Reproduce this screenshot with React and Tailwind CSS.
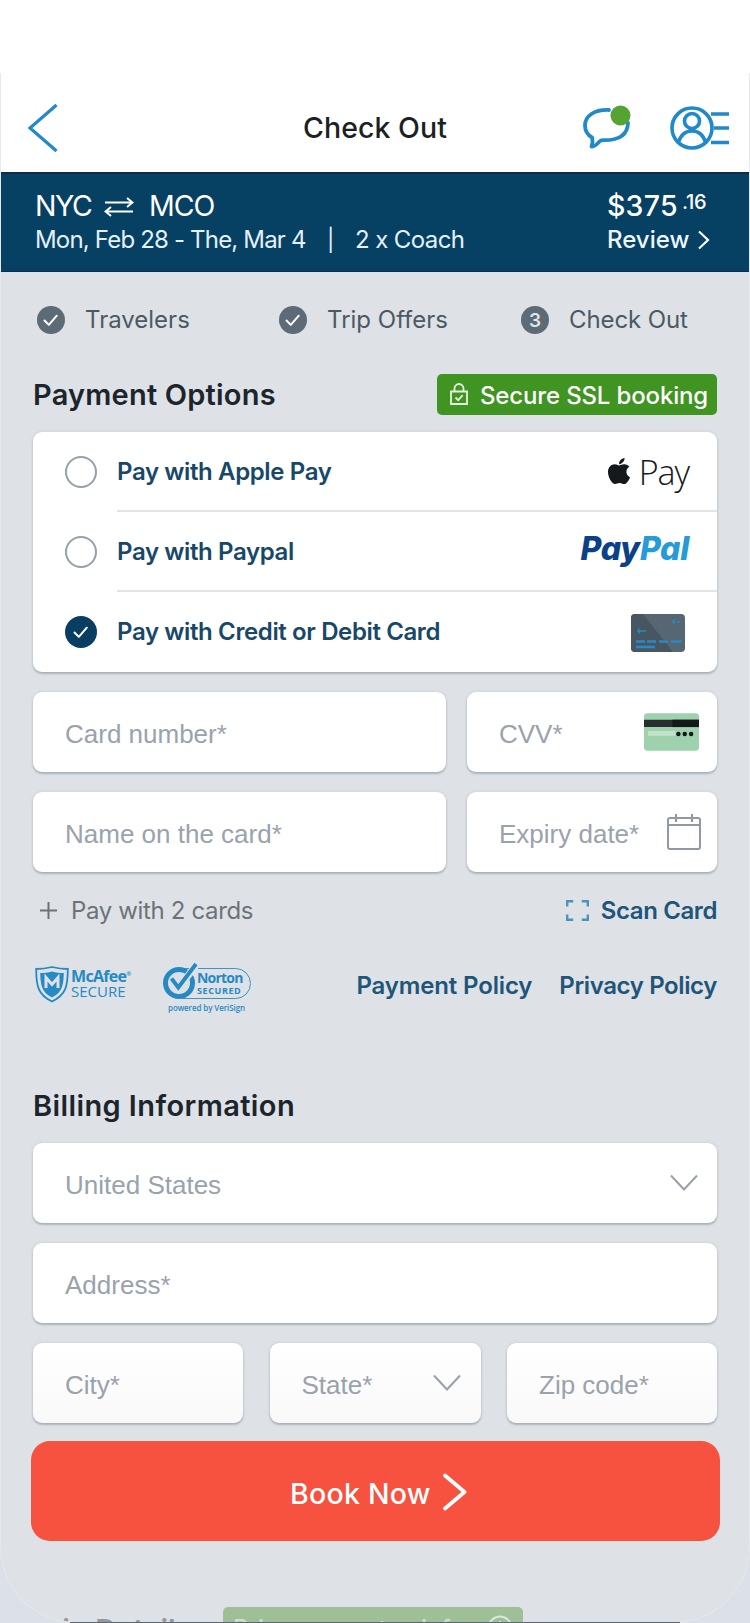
import { FaApple } from "react-icons/fa";

const shadow = "shadow-[0_2px_2px_rgba(120,130,140,0.45),0_0_3px_rgba(120,130,140,0.25)]";

function Field({ label, className = "", children }) {
  return (
    <div className={`flex h-20 items-center justify-between rounded-[9px] bg-white pl-8 font-['Liberation_Sans',sans-serif] text-[26px] leading-none whitespace-nowrap text-[#9aa2ac] ${shadow} ${className}`}>
      <span className="pt-[3px]">{label}</span>
      {children}
    </div>
  );
}

function Tick({ size }) {
  return (
    <svg width={size} height={size} viewBox="0 0 28 28" fill="none" stroke="#fff" strokeWidth="2" strokeLinecap="round" strokeLinejoin="round">
      <path d="M7.5 14.5l4.3 4.4 8-9.2" />
    </svg>
  );
}

function Step({ mark, label, className }) {
  return (
    <div className={`flex items-center text-[24px] leading-none text-[#4d5962] ${className}`}>
      <span className="mr-5 flex size-7 items-center justify-center rounded-full bg-[#5d6b77] text-[19px] font-semibold text-[#dfe5ea]">{mark}</span>
      {label}
    </div>
  );
}

function Option({ label, checked, divider, children }) {
  return (
    <div className="flex h-20 items-center pl-8">
      {checked ? (
        <span className="flex size-8 items-center justify-center rounded-full bg-[#0a3d62]">
          <Tick size={28} />
        </span>
      ) : (
        <span className="size-8 rounded-full border-[2.5px] border-[#979fa9] bg-white" />
      )}
      <div className={`ml-5 flex h-full flex-1 items-center justify-between ${divider ? "border-b-2 border-[#e1e4e9] pt-0.5" : ""}`}>
        <span className="text-[24px] leading-none font-semibold tracking-[-0.38px] text-[#174869]">{label}</span>
        {children}
      </div>
    </div>
  );
}

function ChevronDown({ className }) {
  return (
    <svg className={className} width="30" height="20" viewBox="0 0 30 20" fill="none" stroke="#98a0aa" strokeWidth="2">
      <path d="M2 2.5l13 14 13-14" />
    </svg>
  );
}

export default function App() {
  return (
    <div className="relative flex h-[1623px] w-[750px] flex-col overflow-hidden bg-[#dee2e7] font-['Inter',sans-serif] text-[#1c252c]">
      <header className="flex h-[172px] items-center justify-between bg-white pt-[84px] pr-[20px] pl-[27px]">
        <svg width="32" height="52" viewBox="0 0 32 52" fill="none" stroke="#2089c9" strokeWidth="3.2">
          <path d="M29.5 3L3 26l26.5 23" />
        </svg>
        <h1 className="ml-[244px] text-[28.5px] leading-none font-medium tracking-[0.05px] text-[#1c1f24]">Check Out</h1>
        <div className="ml-auto flex items-center gap-[39px]">
          <svg width="48" height="46" viewBox="0 0 48 46" fill="none">
            <path d="M26 5C11 4.500 2 11 2 20.500c0 5.500 2.800 9.500 7.200 12.200.8 3.200.4 6-.7 8.800 1.500.6 4-.7 8-5 .9-1 2-1.300 3.500-1.300C34 35.500 44.500 31 45 18" stroke="#2089c9" strokeWidth="3.800" strokeLinecap="round" strokeLinejoin="round" />
            <circle cx="37.500" cy="10.500" r="10" fill="#55a332" />
          </svg>
          <svg width="60" height="46" viewBox="0 0 60 46" fill="none" stroke="#2089c9" strokeWidth="3.600">
            <circle cx="22" cy="23" r="20" />
            <circle cx="22" cy="16" r="7.500" />
            <path d="M8.500 37C11 29.500 16 26 22 26s11 3.500 13.500 11M41 9h18M44 23h15M41 37.500h18" />
          </svg>
        </div>
      </header>

      <section className="flex h-[100px] justify-between border-t-2 border-b border-t-[#0a2e4c] border-b-[#0a2e4c] bg-[#064063] pt-4 pr-[39px] pl-[35px] text-white">
        <div>
          <div className="flex h-[33px] items-center text-[28.5px] leading-none">
            <span className="w-[69px] tracking-[-1.4px]">NYC</span>
            <svg width="30" height="20" viewBox="0 0 30 20" fill="none" stroke="#fff" strokeWidth="2">
              <path d="M1 5.500h27M23 1l5.500 4.500L23 10M29 14.500H2M7 10L1.500 14.500 7 19" />
            </svg>
            <span className="ml-[15px] tracking-[-1px]">MCO</span>
          </div>
          <div className="flex h-[33px] items-center text-[24px] leading-none text-[#e4f1fa]">
            <span className="w-[292px] tracking-[-0.82px] whitespace-nowrap">Mon, Feb 28 - The, Mar 4</span>
            <span className="w-[28px] text-[22px]">|</span>
            <span className="tracking-[-0.6px]">2 x Coach</span>
          </div>
        </div>
        <div className="w-[104px]">
          <div className="flex h-[33px] items-center leading-none font-medium">
            <span className="w-[75px] text-[28.5px] tracking-[0.2px]">$375</span>
            <span className="-mt-2.5 text-[20px] tracking-[-0.3px]">.16</span>
          </div>
          <div className="flex h-[33px] items-center text-[24px] leading-none font-medium text-[#eef7fd]">
            Review
            <svg className="ml-2" width="13" height="20" viewBox="0 0 13 20" fill="none" stroke="#fff" strokeWidth="2.200">
              <path d="M2 1.500l9 8.500-9 8.500" />
            </svg>
          </div>
        </div>
      </section>

      <main className="px-[33px]">
        <div className="mt-[23px] flex h-[50px] items-center pl-1">
          <Step className="w-[242px]" mark={<Tick size={28} />} label="Travelers" />
          <Step className="w-[242px]" mark={<Tick size={28} />} label="Trip Offers" />
          <Step className="tracking-[-0.1px]" mark="3" label="Check Out" />
        </div>

        <div className="mt-[29px] flex h-[41px] items-center justify-between">
          <h2 className="text-[29px] leading-none font-semibold tracking-[0.2px]">Payment Options</h2>
          <div className="flex h-[41px] w-[280px] items-center rounded-[5px] bg-[#3f9422] pt-[2px] pl-[13px] text-[24px] leading-none font-medium tracking-[-0.15px] whitespace-nowrap text-white">
            <svg className="-mt-1 mr-3" width="18" height="22" viewBox="0 0 18 22" fill="none" stroke="#e6f3e0" strokeWidth="1.800">
              <path d="M1 8.500h16V21H1zM4.500 8V5.500a4.500 4.500 0 0 1 9 0V8M5.500 14.500l2.700 2.700 4.500-5" />
            </svg>
            Secure SSL booking
          </div>
        </div>

        <div className={`mt-[17px] h-60 rounded-[9px] bg-white ${shadow}`}>
          <Option label="Pay with Apple Pay" divider>
            <div className="mr-[28px] flex items-center gap-[5px] text-[#15191c]">
              <FaApple className="-mt-0.5 size-[30px]" />
              <span className="font-['Open_Sans',sans-serif] text-[34px] leading-none font-light tracking-[-1.1px]">Pay</span>
            </div>
          </Option>
          <Option label="Pay with Paypal" divider>
            <div className="mr-[28px] -mt-1.5 text-[32px] leading-none font-extrabold tracking-[-0.3px] text-[#0b4187] italic">
              Pay<span className="text-[#259bd7]">Pal</span>
            </div>
          </Option>
          <Option label="Pay with Credit or Debit Card" checked>
            <svg className="mt-0.5 mr-8" width="54" height="38" viewBox="0 0 54 38">
              <rect width="54" height="38" rx="4" fill="#566672" />
              <path d="M12 0L42 38H4a4 4 0 0 1-4-4V4a4 4 0 0 1 4-4z" fill="#485662" />
              <g stroke="#2889c4" strokeWidth="2.500" fill="none">
                <path d="M5 27.500h9M16 27.500h9M28 27.500h9M40 27.500h11M5 33h19" />
                <path d="M6 17h9M8 14.500v5" strokeWidth="1.500" />
                <path d="M41 8h3M46 8h3M43 5v5" strokeWidth="1.500" />
              </g>
            </svg>
          </Option>
        </div>

        <div className="mt-5 grid grid-cols-[412.5px_250px] gap-x-[21.5px] gap-y-5">
          <Field label="Card number*" />
          <Field label="CVV*">
            <svg className="mr-[18px]" width="55" height="38" viewBox="0 0 56 38">
              <rect width="56" height="38" rx="3.500" fill="#9ed1ae" />
              <path d="M0 6.500h56V14H0z" fill="#2a2d2f" />
              <path d="M29 6.500h27V14H29z" fill="#15181a" />
              <path d="M4 18h28v5H4z" fill="#c0e2c8" />
              <circle cx="35" cy="21" r="2.300" fill="#15181a" />
              <circle cx="41.500" cy="21" r="2.300" fill="#15181a" />
              <circle cx="48" cy="21" r="2.300" fill="#15181a" />
            </svg>
          </Field>
          <Field label="Name on the card*" />
          <Field label="Expiry date*">
            <svg className="mr-[15px]" width="36" height="36" viewBox="0 0 36 36" fill="none" stroke="#9299a2" strokeWidth="2">
              <rect x="2" y="4" width="32" height="31" rx="2" />
              <path d="M2 11h32M10 0v8M26 0v8" />
            </svg>
          </Field>
        </div>

        <div className="mt-[19px] flex h-10 items-center justify-between text-[24px] leading-none">
          <div className="flex items-center pl-[7px] tracking-[-0.35px] text-[#6c7378]">
            <svg className="-mt-0.5 mr-[14px]" width="17" height="17" viewBox="0 0 17 17" fill="none" stroke="#6c7378" strokeWidth="2">
              <path d="M0 8.500h17M8.500 0v17" />
            </svg>
            Pay with 2 cards
          </div>
          <div className="flex items-center font-semibold tracking-[-0.4px] text-[#205579]">
            <svg className="-mt-0.5 mr-3" width="23" height="21" viewBox="0 0 23 21" fill="none" stroke="#4c93b9" strokeWidth="2.400">
              <path d="M1.200 6.500V1.200h6M15.800 1.200h6v5.300M21.800 14.500v5.300h-6M7.200 19.800h-6v-5.300" />
            </svg>
            Scan Card
          </div>
        </div>

        <div className="mt-6 flex h-[60px] items-center justify-between text-[#2589c4]">
          <div className="flex h-full items-start">
            <svg className="mt-[11px] ml-[2px]" width="34" height="37" viewBox="0 0 34 37">
              <path d="M17 1C11 2.500 6 3 1.200 3c0 17 1.800 26 15.800 32.500C31 29 32.800 20 32.800 3 28 3 23 2.500 17 1z" fill="none" stroke="#2589c4" strokeWidth="1.800" />
              <path d="M17 5.500C13 6.500 9 7 5.200 7c.3 13 2 19.500 11.800 24.500C26.800 26.500 28.500 20 28.800 7 25 7 21 6.500 17 5.500z" fill="#2589c4" />
              <path d="M11 22V11.500l6 7 6-7V22" fill="none" stroke="#dde1e7" strokeWidth="3" />
            </svg>
            <div className="mt-[14px] ml-[2px] flex w-[59px] flex-col font-['Open_Sans',sans-serif]">
              <span className="text-[16px] leading-[15px] font-bold tracking-[-0.7px] whitespace-nowrap">McAfee<span className="align-[6px] text-[6px] leading-none tracking-normal">®</span></span>
              <span className="text-[15px] leading-[15px]">SECURE</span>
            </div>
            <div className="mt-[7px] ml-[31px] flex w-[92px] flex-col">
              <div className="flex items-center">
                <svg className="z-10 shrink-0" width="38" height="40" viewBox="0 0 38 40" fill="none">
                  <circle cx="18" cy="21" r="13.500" fill="#dde1e7" stroke="#2589c4" strokeWidth="5" />
                  <path d="M9.500 17l7.500 9.500L36 2" stroke="#dde1e7" strokeWidth="7" />
                  <path d="M10.500 16.500l6.800 9L35 2" stroke="#2589c4" strokeWidth="3.800" />
                </svg>
                <div className="-ml-[17px] mt-[2px] flex h-[31px] w-[69px] shrink-0 flex-col rounded-r-[16px] border-[1.5px] border-[#3c93c6] pt-[2px] pl-[14px] font-['Open_Sans',sans-serif] font-bold">
                  <span className="text-[14px] leading-[14px] tracking-[-0.8px]">Norton</span>
                  <span className="text-[9px] leading-[11px] tracking-[0.6px]">SECURED</span>
                </div>
              </div>
              <span className="mt-px ml-[7px] font-['Open_Sans',sans-serif] text-[8px] leading-[9px] font-semibold tracking-[-0.1px] whitespace-nowrap">powered by VeriSign</span>
            </div>
          </div>
          <div className="flex gap-[27px] pt-0.5 text-[24px] leading-none font-semibold text-[#205579]">
            <span className="tracking-[-0.15px]">Payment Policy</span>
            <span className="tracking-[-0.38px]">Privacy Policy</span>
          </div>
        </div>

        <h2 className="mt-[70px] flex h-10 items-center text-[29px] leading-none font-semibold tracking-[0.4px]">Billing Information</h2>
        <div className="mt-[18px] flex flex-col gap-5">
          <Field label="United States">
            <ChevronDown className="mr-[18px]" />
          </Field>
          <Field label="Address*" />
          <div className="flex justify-between">
            <Field label="City*" className="w-[210px] bg-linear-to-b from-white to-[#f9f9f9]" />
            <Field label="State*" className="w-[211px] bg-linear-to-b from-white to-[#f9f9f9]">
              <ChevronDown className="mr-[19px]" />
            </Field>
            <Field label="Zip code*" className="w-[210px] bg-linear-to-b from-white to-[#f9f9f9]" />
          </div>
        </div>
      </main>

      <button className="mt-[18px] ml-[31px] flex h-[100px] w-[688.5px] shrink-0 items-center rounded-[19px] bg-[#f6523f] pl-[259px] text-[28.5px] leading-none font-medium tracking-[0.25px] text-white">
        <span className="mt-1.5">Book Now</span>
        <svg className="mt-px ml-[11px]" width="26" height="38" viewBox="0 0 26 38" fill="none" stroke="#fff" strokeWidth="3.800" strokeLinecap="round" strokeLinejoin="round">
          <path d="M3 2.500L22.500 19 3 35.500" />
        </svg>
      </button>

      <div className="mt-[66px] flex h-4 shrink-0 items-start overflow-hidden pl-[33px]">
        <span className="mt-[9px] w-[190px] text-[29px] leading-[28px] font-semibold text-[#9299a1]">Trip Details</span>
        <div className="flex h-10 w-[300px] items-start justify-between rounded-[5px] bg-[#9fc096] pt-2 pr-2.5 pl-2.5 text-[24px] leading-[28px] font-medium whitespace-nowrap text-[#cfe0ca]">
          Price guarantee info
          <svg width="26" height="26" viewBox="0 0 26 26" fill="none" stroke="#dbe9d8" strokeWidth="2">
            <circle cx="13" cy="13" r="11.500" />
            <path d="M13 6v14" />
          </svg>
        </div>
      </div>

      <div className="pointer-events-none absolute inset-x-0 top-[1540px] h-[83px] rounded-b-[76px] border-x border-b border-[#e4e7ec] shadow-[0_0_0_80px_#dce1e9] [clip-path:inset(0)]" />
      <div className="pointer-events-none absolute top-[1622px] left-[70px] h-px w-[610px] bg-[#5b6772]" />
      <div className="pointer-events-none absolute inset-x-0 top-[73px] h-[1467px] border-x border-[#e6e9ee]" />
    </div>
  );
}
